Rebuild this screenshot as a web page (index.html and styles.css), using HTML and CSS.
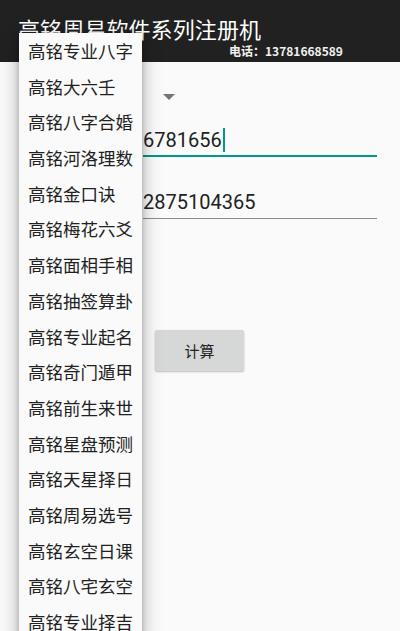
FILE: index.html
```html
<!DOCTYPE html>
<html lang="zh">
<head>
<meta charset="utf-8">
<title>高铭周易软件系列注册机</title>
<link rel="stylesheet" href="styles.css">
</head>
<body>
<div class="app">
  <header class="toolbar">
    <h1 class="title">高铭周易软件系列注册机</h1>
    <div class="phone">电话：13781668589</div>
  </header>
  <main class="form">
    <div class="spinner-row">
      <span class="spinner-arrow"></span>
    </div>
    <div class="field field-focused">
      <span class="field-text">6781656</span><span class="caret"></span>
    </div>
    <div class="field">
      <span class="field-text">2875104365</span>
    </div>
    <div class="actions">
      <button class="btn">计算</button>
    </div>
  </main>
  <ul class="menu">
    <li>高铭专业八字</li>
    <li>高铭大六壬</li>
    <li>高铭八字合婚</li>
    <li>高铭河洛理数</li>
    <li>高铭金口诀</li>
    <li>高铭梅花六爻</li>
    <li>高铭面相手相</li>
    <li>高铭抽签算卦</li>
    <li>高铭专业起名</li>
    <li>高铭奇门遁甲</li>
    <li>高铭前生来世</li>
    <li>高铭星盘预测</li>
    <li>高铭天星择日</li>
    <li>高铭周易选号</li>
    <li>高铭玄空日课</li>
    <li>高铭八宅玄空</li>
    <li>高铭专业择吉</li>
  </ul>
</div>
</body>
</html>
```

FILE: styles.css
```css
* { box-sizing: border-box; }

html, body {
  margin: 0;
  padding: 0;
  height: 100%;
  overflow: hidden;
  background: #fafafa;
  font-family: "Noto Sans CJK SC", "Roboto", "Noto Sans", sans-serif;
  color: #212121;
}

.app {
  position: relative;
  height: 631px;
  overflow: hidden;
}

/* dark action bar */
.toolbar {
  height: 62px;
  background: #212121;
  color: #fff;
  display: flex;
  flex-direction: column;
  padding: 12px 0 0 18px;
}

.title {
  margin: 0;
  font-size: 22px;
  font-weight: 400;
  line-height: 32px;
  letter-spacing: 0.1px;
}

.phone {
  align-self: flex-start;
  margin: -1px 0 0 211px;
  font-size: 12px;
  font-weight: 700;
  line-height: 16px;
  color: #f0f0f0;
}

/* form body */
.form {
  display: flex;
  flex-direction: column;
  padding-left: 143px;
}

.spinner-row {
  height: 46px;
  display: flex;
  align-items: center;
  padding-left: 20px;
  padding-top: 23px;
}

.spinner-arrow {
  width: 0;
  height: 0;
  border-left: 6px solid transparent;
  border-right: 6px solid transparent;
  border-top: 6px solid #757575;
}

.field {
  width: 234px;
  display: flex;
  align-items: center;
  border-bottom: 1px solid #8c8c8c;
  font-family: "Roboto", "Noto Sans CJK SC", sans-serif;
  font-size: 20px;
  height: 50px;
  padding-top: 16px;
}

.field-focused {
  border-bottom: 2px solid #009688;
  height: 49px;
  margin-bottom: 12px;
}

.field-text {
  line-height: 24px;
  color: #212121;
}

.caret {
  width: 2px;
  height: 24px;
  background: #009688;
  margin-left: 1px;
}

.actions {
  padding: 111px 0 0 12px;
}

.btn {
  width: 89px;
  height: 41px;
  border: none;
  border-radius: 2px;
  background: #d6d7d7;
  box-shadow: 0 1px 2px rgba(0, 0, 0, 0.25);
  font-family: "Noto Sans CJK SC", sans-serif;
  font-size: 15px;
  color: #222;
  padding: 0;
}

/* open spinner dropdown */
.menu {
  position: absolute;
  left: 19px;
  top: 33px;
  width: 123px;
  margin: 0;
  padding: 0;
  list-style: none;
  background: #fafafa;
  box-shadow: 0 6px 18px rgba(0, 0, 0, 0.3), 0 2px 6px rgba(0, 0, 0, 0.2);
}

.menu li {
  height: 35.7px;
  line-height: 35.7px;
  padding-left: 9px;
  font-size: 17.5px;
  white-space: nowrap;
  color: #212121;
}
```
